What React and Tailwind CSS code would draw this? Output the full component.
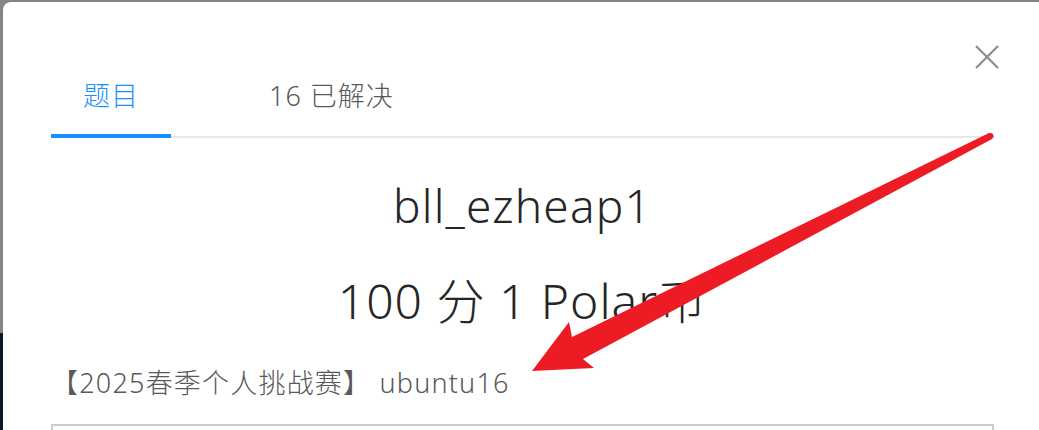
import React, { useState } from 'react';

const TABS = [
    { id: 'problem', label: '题目' },
    { id: 'solved', label: '16 已解决' },
];

export default function App() {
    const [tab, setTab] = useState('problem');

    return (
        <div className="relative w-[1039px] h-[430px] overflow-hidden flex bg-[#858585] font-['Noto_Sans','Noto_Sans_CJK_SC',sans-serif]">
            {/* page behind the overlay */}
            <div className="w-[3px] flex flex-col shrink-0">
                <div className="h-[333px] bg-[#858585]" />
                <div className="flex-1 bg-[#0d1628]" />
            </div>

            {/* modal */}
            <div className="relative mt-[2px] flex-1 min-w-0 bg-white rounded-tl-[8px] pl-[48px] pr-[45px]">
                <button type="button" className="absolute right-[40px] top-[43px] w-[24px] h-[24px] text-[#8c8c8c]">
                    <svg viewBox="0 0 24 24" width="24" height="24" fill="none" stroke="currentColor" strokeWidth="2.2">
                        <path d="M1 1 L23 23 M23 1 L1 23" />
                    </svg>
                </button>

                {/* tabs */}
                <div className="mt-[56px] flex gap-[66px] border-b-2 border-[#e8e8e8]">
                    {TABS.map(({ id, label }) => (
                        <button
                            key={id}
                            type="button"
                            onClick={() => setTab(id)}
                            className={`px-[32px] pt-[20px] pb-[20px] text-[27px] leading-[36px] tracking-[1px] font-light -mb-[2px] border-b-4 ${tab === id ? 'border-[#1890ff] text-[#1890ff]' : 'border-transparent text-[#595959]'}`}
                        >
                            {label}
                        </button>
                    ))}
                </div>

                <h1 className="mt-[37px] text-center text-[46px] leading-[60px] tracking-[1.2px] text-[#262626] font-light">bll_ezheap1</h1>
                <h2 className="mt-[34px] text-center text-[48px] leading-[64px] tracking-[1px] text-[#262626] font-light">100 分 1 Polar币</h2>
                <p className="mt-[32px] text-[27px] leading-[36px] tracking-[1.2px] text-[#595959] font-light">【2025春季个人挑战赛】 ubuntu16</p>

                <div className="mt-[23px] h-[120px] border-2 border-[#cccccc]" />
            </div>

            {/* red annotation arrow */}
            <svg className="absolute inset-0 pointer-events-none" width="1039" height="430" viewBox="0 0 1039 430">
                <polygon
                    fill="#ed1c24"
                    points="989,133 572,337 569,322 532,371 594,368 583,359 992,139"
                />
                <circle cx="990.5" cy="136" r="3" fill="#ed1c24" />
            </svg>
        </div>
    );
}
